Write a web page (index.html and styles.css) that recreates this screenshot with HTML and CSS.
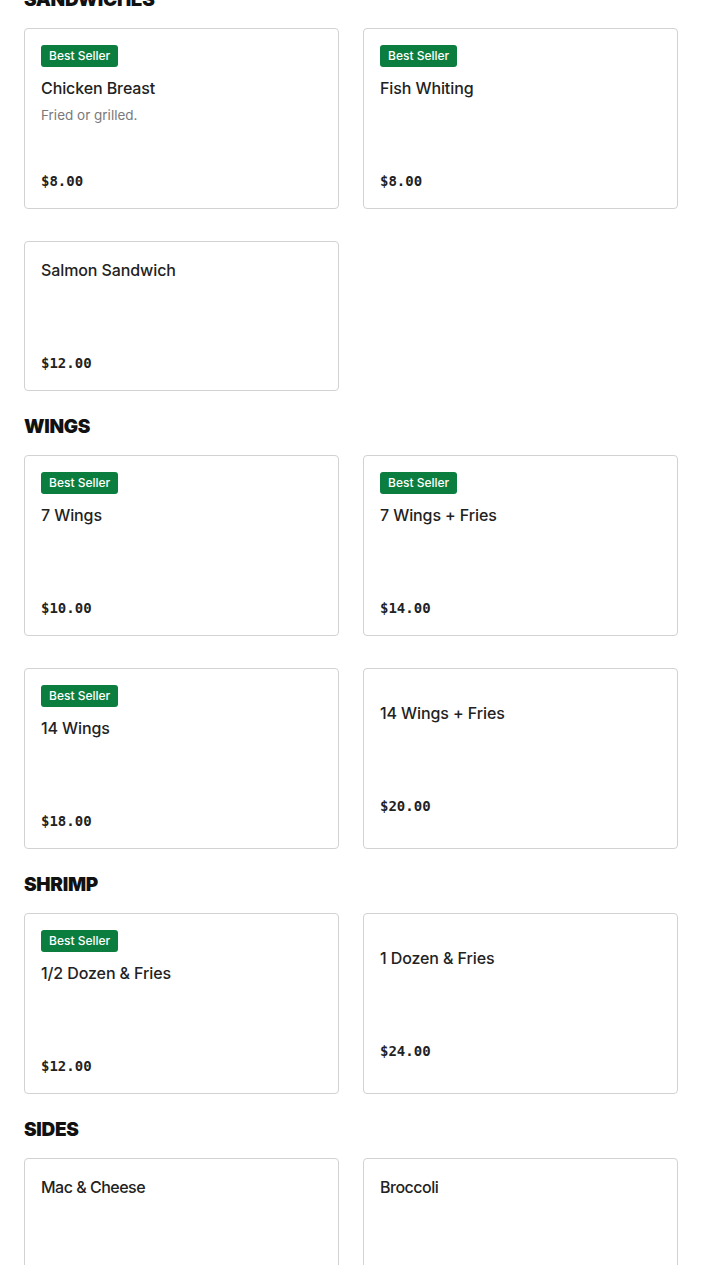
FILE: index.html
```html
<!DOCTYPE html>
<html lang="en">
<head>
<meta charset="utf-8">
<title>Menu</title>
<link rel="stylesheet" href="styles.css">
</head>
<body>
<main class="menu">
  <section class="category">
    <h2 class="category-title">SANDWICHES</h2>
    <div class="grid">
      <article class="item">
        <span class="badge">Best Seller</span>
        <div class="item-body">
          <h3 class="item-name">Chicken Breast</h3>
          <p class="item-desc">Fried or grilled.</p>
        </div>
        <div class="price">$8.00</div>
      </article>
      <article class="item">
        <span class="badge">Best Seller</span>
        <div class="item-body">
          <h3 class="item-name">Fish Whiting</h3>
        </div>
        <div class="price">$8.00</div>
      </article>
      <article class="item">
        <div class="item-body">
          <h3 class="item-name">Salmon Sandwich</h3>
        </div>
        <div class="price">$12.00</div>
      </article>
    </div>
  </section>

  <section class="category">
    <h2 class="category-title">WINGS</h2>
    <div class="grid">
      <article class="item">
        <span class="badge">Best Seller</span>
        <div class="item-body">
          <h3 class="item-name">7 Wings</h3>
        </div>
        <div class="price">$10.00</div>
      </article>
      <article class="item">
        <span class="badge">Best Seller</span>
        <div class="item-body">
          <h3 class="item-name">7 Wings + Fries</h3>
        </div>
        <div class="price">$14.00</div>
      </article>
      <article class="item">
        <span class="badge">Best Seller</span>
        <div class="item-body">
          <h3 class="item-name">14 Wings</h3>
        </div>
        <div class="price">$18.00</div>
      </article>
      <article class="item">
        <div class="item-body">
          <h3 class="item-name">14 Wings + Fries</h3>
        </div>
        <div class="price">$20.00</div>
      </article>
    </div>
  </section>

  <section class="category">
    <h2 class="category-title">SHRIMP</h2>
    <div class="grid">
      <article class="item">
        <span class="badge">Best Seller</span>
        <div class="item-body">
          <h3 class="item-name">1/2 Dozen &amp; Fries</h3>
        </div>
        <div class="price">$12.00</div>
      </article>
      <article class="item">
        <div class="item-body">
          <h3 class="item-name">1 Dozen &amp; Fries</h3>
        </div>
        <div class="price">$24.00</div>
      </article>
    </div>
  </section>

  <section class="category">
    <h2 class="category-title">SIDES</h2>
    <div class="grid">
      <article class="item">
        <div class="item-body">
          <h3 class="item-name side">Mac &amp; Cheese</h3>
        </div>
        <div class="price">$5.00</div>
      </article>
      <article class="item">
        <div class="item-body">
          <h3 class="item-name side">Broccoli</h3>
        </div>
        <div class="price">$5.00</div>
      </article>
    </div>
  </section>
</main>
</body>
</html>
```

FILE: styles.css
```css
html, body {
  margin: 0;
  padding: 0;
  background: #ffffff;
}

body {
  font-family: Inter, "Liberation Sans", Arial, sans-serif;
  color: #1f1f1f;
}

.menu {
  margin-top: -13px;
  padding: 0 27px 40px 24px;
}

.category {
  margin-bottom: 23px;
}

.category-title {
  margin: 0 0 16px 0;
  padding-top: 1px;
  font-family: Inter, "Liberation Sans", Arial, sans-serif;
  font-weight: 900;
  font-size: 19px;
  line-height: 24px;
  letter-spacing: -0.3px;
  color: #111111;
}

.grid {
  display: grid;
  grid-template-columns: 1fr 1fr;
  column-gap: 24px;
  row-gap: 32px;
}

.item {
  display: flex;
  flex-direction: column;
  justify-content: center;
  align-items: flex-start;
  border: 1px solid #d2d2d2;
  border-radius: 4px;
  padding: 16px 16px 17px 16px;
  background: #ffffff;
}

.badge {
  display: inline-block;
  height: 22px;
  line-height: 22px;
  padding: 0 8px;
  margin-bottom: 9px;
  background: #0b7d3f;
  color: #ffffff;
  font-size: 12px;
  font-weight: 500;
  border-radius: 3px;
}

.item-body {
  min-height: 95px;
}

.item-name {
  margin: 0;
  font-size: 16px;
  line-height: 24px;
  font-weight: 500;
  color: #222222;
  letter-spacing: -0.1px;
}

.item-name.side {
  letter-spacing: -0.5px;
}

.item-desc {
  margin: 5px 0 0 0;
  font-size: 13.5px;
  line-height: 20px;
  color: #7a7a7a;
}

.price {
  font-family: "DejaVu Sans Mono", "Liberation Mono", monospace;
  font-weight: bold;
  font-size: 14px;
  line-height: 20px;
  color: #222222;
}
```
